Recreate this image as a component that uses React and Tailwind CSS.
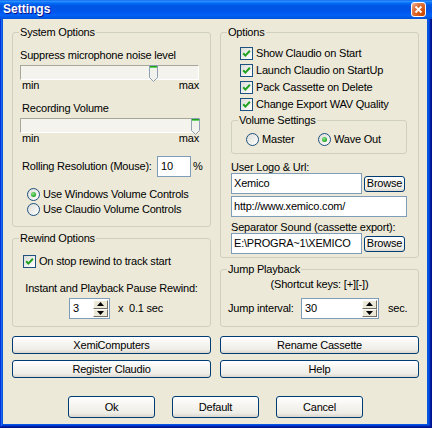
import React from "react";

// XP "Luna" look, small font dialog
const BTN =
  "border border-[#003C74] rounded-[3px] bg-[linear-gradient(to_bottom,#FFFFFF_0%,#F6F5F1_40%,#EEEDE7_80%,#D9D5CA_100%)] flex items-center justify-center text-black";

function GroupBox({ label, className = "", children }) {
  return (
    <fieldset className={`border border-[#D0D0BF] rounded-[3px] min-w-0 ${className}`}>
      <legend className="ml-[6px] px-[1px] leading-[13px]">{label}</legend>
      {children}
    </fieldset>
  );
}

function Check() {
  return (
    <span className="w-[13px] h-[13px] shrink-0 border border-[#1C5180] bg-[linear-gradient(135deg,#DCDCD7,#FFFFFF)] flex items-center justify-center">
      <svg width="11" height="11" viewBox="0 0 11 11">
        <path d="M2.2 5.2L4.4 7.6L8.9 2.8" fill="none" stroke="#21A121" strokeWidth="2" />
      </svg>
    </span>
  );
}

function Radio({ on }) {
  return (
    <span className="w-[13px] h-[13px] shrink-0 rounded-full border border-[#1C5180] bg-[linear-gradient(135deg,#DCDCD7,#FFFFFF)] flex items-center justify-center">
      {on && (
        <span className="w-[5px] h-[5px] rounded-full bg-[radial-gradient(circle_at_40%_35%,#8BEA8B,#21A121_70%)]" />
      )}
    </span>
  );
}

function Slider({ thumb }) {
  return (
    <div className="relative h-[15px] border border-t-[#A7A69A] border-l-[#A7A69A] border-b-white border-r-white bg-[#F4F3EE]">
      <svg className={`absolute top-[-1px] ${thumb}`} width="9" height="17" viewBox="0 0 9 17">
        <path d="M0.5 0.5H8.5V12.5L4.5 16.5L0.5 12.5Z" fill="#F2F2EC" stroke="#8FA0B5" />
        <rect x="1" y="1" width="7" height="1" fill="#1EA21E" />
        <rect x="1" y="2" width="7" height="1" fill="#66CF66" />
      </svg>
    </div>
  );
}

function MinMax() {
  return (
    <div className="-mt-[1px] flex justify-between pl-[2px] leading-[13px]">
      <span>min</span>
      <span>max</span>
    </div>
  );
}

function TextBox({ className = "", children }) {
  return (
    <div className={`h-[21px] shrink-0 border border-[#7F9DB9] bg-white flex items-center pl-[2px] overflow-hidden whitespace-nowrap ${className}`}>
      {children}
    </div>
  );
}

function Arrow({ up }) {
  return (
    <svg width="7" height="4" viewBox="0 0 7 4">
      <path d={up ? "M0 4H7L3.5 0Z" : "M0 0H7L3.5 4Z"} fill="#000" />
    </svg>
  );
}

function Spinner({ className = "", value }) {
  return (
    <div className={`h-[21px] shrink-0 flex border border-[#7F9DB9] bg-white ${className}`}>
      <div className="flex-1 flex items-center pl-[3px]">{value}</div>
      <div className="w-[15px] my-[1px] mr-[1px] flex flex-col">
        <div className="flex-1 flex items-center justify-center bg-[#ECE9D8] border border-t-white border-l-white border-b-[#716F64] border-r-[#716F64]">
          <Arrow up />
        </div>
        <div className="flex-1 flex items-center justify-center bg-[#ECE9D8] border border-t-white border-l-white border-b-[#716F64] border-r-[#716F64]">
          <Arrow />
        </div>
      </div>
    </div>
  );
}

function CheckRow({ children, className = "" }) {
  return (
    <div className={`flex items-center gap-[3px] ${className}`}>
      <Check />
      <span>{children}</span>
    </div>
  );
}

function RadioRow({ on, children, className = "" }) {
  return (
    <div className={`flex items-center gap-[3px] ${className}`}>
      <Radio on={on} />
      <span>{children}</span>
    </div>
  );
}

function CloseButton() {
  return (
    <div className="w-[15px] h-[15px] rounded-[3px] border border-white bg-[radial-gradient(circle_at_90%_90%,#CC4600_0%,#DC6527_55%,#E1825A_75%,#F6B89A_95%)] flex items-center justify-center">
      <svg width="9" height="9" viewBox="0 0 9 9">
        <path d="M1.5 1.5L7.5 7.5M7.5 1.5L1.5 7.5" stroke="#fff" strokeWidth="1.8" />
      </svg>
    </div>
  );
}

export default function App() {
  return (
    <div className="w-[432px] h-[428px] flex flex-col bg-[#0855DD] shadow-[inset_-1px_-1px_#00138c,inset_1px_1px_#0831d9,inset_-2px_-2px_#001ea0,inset_2px_2px_#166aee,inset_-3px_-3px_#003bda,inset_3px_3px_#0855dd] font-['Liberation_Sans',Arial,sans-serif] text-[11px] leading-[13px] tracking-[-0.2px] text-black select-none">
      {/* Title bar */}
      <div className="h-[19px] shrink-0 flex items-center justify-between pl-[3px] pr-[6px] bg-[linear-gradient(to_bottom,#0058EE_0%,#3593FF_5%,#288EFF_8%,#127DFF_12%,#036FFC_16%,#0262EE_22%,#0057E5_30%,#0054E3_40%,#0055EB_60%,#005BF5_70%,#0262F4_80%,#005AEA_90%,#0050D8_100%)]">
        <span className="text-white font-bold text-[12px] tracking-normal [text-shadow:1px_1px_#0F1089]">
          Settings
        </span>
        <CloseButton />
      </div>

      {/* Client */}
      <div className="flex-1 flex flex-col pl-[3px] pr-[5px] pb-[4px]">
        <div className="flex-1 bg-[#ECE9D8] flex flex-col pl-[9px] pr-[8px] pt-[7px]">
          <div className="flex gap-[9px]">
            {/* Left column */}
            <div className="w-[199px] flex flex-col">
              <GroupBox label="System Options" className="h-[201px]">
                <div className="pl-[7px] pr-[11px] pt-[10px] flex flex-col">
                  <div>Suppress microphone noise level</div>
                  <div className="mt-[3px]">
                    <Slider thumb="left-[128px]" />
                  </div>
                  <MinMax />
                  <div className="mt-[10px] ml-[2px]">Recording Volume</div>
                  <div className="mt-[3px]">
                    <Slider thumb="left-[170px]" />
                  </div>
                  <MinMax />
                  <div className="mt-[11px] ml-[2px] h-[21px] flex items-center">
                    <span className="w-[135px] shrink-0">Rolling Resolution (Mouse):</span>
                    <TextBox className="w-[34px] pl-[3px]">10</TextBox>
                    <span className="ml-[2px]">%</span>
                  </div>
                  <div className="mt-[10px] ml-[7px] flex flex-col">
                    <RadioRow on className="h-[15px]">Use Windows Volume Controls</RadioRow>
                    <RadioRow className="h-[15px]">Use Claudio Volume Controls</RadioRow>
                  </div>
                </div>
              </GroupBox>

              <GroupBox label="Rewind Options" className="mt-[5px] h-[95px]">
                <div className="pt-[10px] flex flex-col">
                  <CheckRow className="ml-[10px] h-[13px]">On stop rewind to track start</CheckRow>
                  <div className="mt-[14px] text-center">Instant and Playback Pause Rewind:</div>
                  <div className="mt-[3px] ml-[56px] flex items-center gap-[8px]">
                    <Spinner className="w-[41px]" value="3" />
                    <span className="whitespace-pre">x  0.1 sec</span>
                  </div>
                </div>
              </GroupBox>
            </div>

            {/* Right column */}
            <div className="w-[199px] flex flex-col">
              <GroupBox label="Options" className="h-[232px]">
                <div className="pt-[6px] pl-[10px] pr-[11px] flex flex-col">
                  <div className="ml-[9px] flex flex-col">
                    <CheckRow className="h-[17px]">Show Claudio on Start</CheckRow>
                    <CheckRow className="h-[17px]">Launch Claudio on StartUp</CheckRow>
                    <CheckRow className="h-[17px]">Pack Cassette on Delete</CheckRow>
                    <CheckRow className="h-[17px]">Change Export WAV Quality</CheckRow>
                  </div>

                  <GroupBox label="Volume Settings" className="mt-[1px] h-[40px]">
                    <div className="pt-[6px] pl-[14px] flex items-center h-[19px]">
                      <RadioRow className="w-[72px]">Master</RadioRow>
                      <RadioRow on>Wave Out</RadioRow>
                    </div>
                  </GroupBox>

                  <div className="mt-[7px] leading-[12px]">User Logo &amp; Url:</div>
                  <div className="flex items-center gap-[2px]">
                    <TextBox className="w-[131px]">Xemico</TextBox>
                    <button className={`${BTN} w-[41px] h-[16px] rounded-[2px]`}>Browse</button>
                  </div>
                  <TextBox className="mt-[2px] w-[176px]">http://www.xemico.com/</TextBox>
                  <div className="mt-[4px] leading-[12px]">Separator Sound (cassette export):</div>
                  <div className="flex items-center gap-[2px]">
                    <TextBox className="w-[131px]">E:\PROGRA~1\XEMICO</TextBox>
                    <button className={`${BTN} w-[41px] h-[16px] rounded-[2px]`}>Browse</button>
                  </div>
                </div>
              </GroupBox>

              <GroupBox label="Jump Playback" className="mt-[5px] h-[64px]">
                <div className="pt-[2px] flex flex-col">
                  <div className="text-center">(Shortcut keys: [+][-])</div>
                  <div className="mt-[7px] pl-[7px] h-[21px] flex items-center">
                    <span className="w-[73px] shrink-0">Jump interval:</span>
                    <Spinner className="w-[78px]" value="30" />
                    <span className="ml-[9px]">sec.</span>
                  </div>
                </div>
              </GroupBox>
            </div>
          </div>

          {/* Action buttons */}
          <div className="mt-[9px] grid grid-cols-2 gap-x-[9px] gap-y-[6px]">
            <button className={`${BTN} h-[18px]`}>XemiComputers</button>
            <button className={`${BTN} h-[18px]`}>Rename Cassette</button>
            <button className={`${BTN} h-[18px]`}>Register Claudio</button>
            <button className={`${BTN} h-[18px]`}>Help</button>
          </div>

          <div className="mt-[18px] flex justify-center gap-[17px]">
            <button className={`${BTN} w-[87px] h-[22px]`}>Ok</button>
            <button className={`${BTN} w-[87px] h-[22px]`}>Default</button>
            <button className={`${BTN} w-[87px] h-[22px]`}>Cancel</button>
          </div>
        </div>
      </div>
    </div>
  );
}
